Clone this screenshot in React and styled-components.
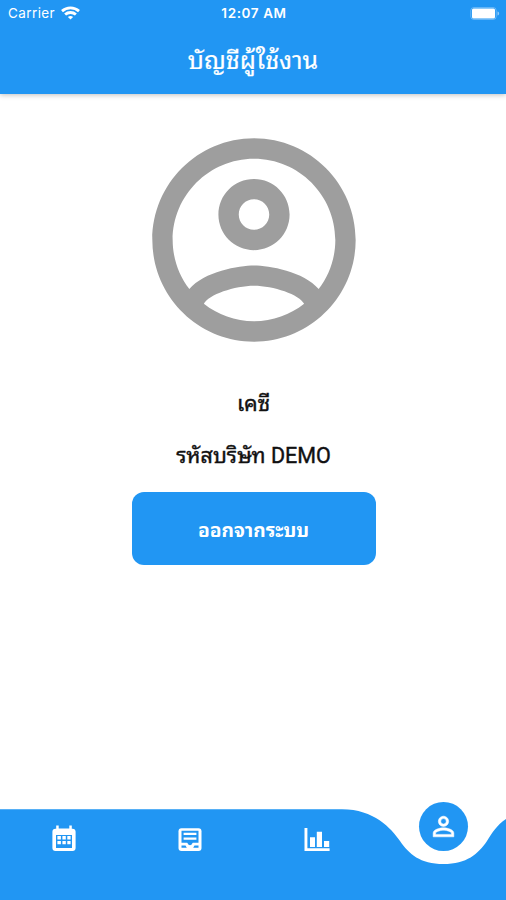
import React from 'react';
import styled, { createGlobalStyle } from 'styled-components';

const BLUE = '#2196f3';

const GlobalStyle = createGlobalStyle`
  * { box-sizing: border-box; }
  body { margin: 0; background: #fff; }
`;

const Screen = styled.div`
  display: flex;
  flex-direction: column;
  width: 506px;
  height: 900px;
  overflow: hidden;
  background: #fff;
  font-family: Roboto, "Noto Sans Thai Looped", Loma, "Noto Serif Thai", sans-serif;
`;

const Header = styled.header`
  height: 93.5px;
  flex: none;
  background: ${BLUE};
  color: #fff;
  box-shadow: 0 1px 5px rgba(0, 0, 0, 0.25);
`;

const StatusBar = styled.div`
  display: grid;
  grid-template-columns: 1fr auto 1fr;
  align-items: center;
  height: 26px;
  padding: 0 6px 0 8px;
  font: 500 13.5px/26px Inter, sans-serif;
`;

const Carrier = styled.div`
  display: flex;
  align-items: center;
  gap: 6px;
  font-weight: 400;
  letter-spacing: 0.4px;
`;

const Clock = styled.div`
  font-weight: 600;
  letter-spacing: 0.6px;
`;

const BatterySlot = styled.div`
  display: flex;
  justify-content: flex-end;
`;

const Title = styled.h1`
  margin: 0;
  height: 67px;
  text-align: center;
  font-size: 25px;
  line-height: 70px;
  font-weight: 400;
  -webkit-text-stroke: 0.2px #fff;
`;

const Content = styled.main`
  flex: 1;
  display: flex;
  flex-direction: column;
  align-items: center;
  padding: 24.5px 0 0 1px;
`;

const Avatar = styled.svg`
  width: 244px;
  height: 244px;
  fill: #9e9e9e;
`;

const Info = styled.div`
  height: 52px;
  margin-top: ${(p) => (p.$first ? '15px' : '0')};
  line-height: 53px;
  font-size: 21.5px;
  font-weight: 400;
  -webkit-text-stroke: 0.4px #111;
  color: #111;
`;

const LogoutButton = styled.button`
  width: 244px;
  height: 73px;
  margin-top: 11px;
  padding: 0;
  border: 0;
  border-radius: 12px;
  background: ${BLUE};
  color: #fff;
  font: inherit;
  font-size: 19.2px;
  font-weight: 700;
`;

const NavBar = styled.nav`
  position: relative;
  flex: none;
  height: 100px;
  display: grid;
  grid-template-columns: repeat(4, 126.5px);
`;

const NavShape = styled.svg`
  position: absolute;
  inset: 0;
  fill: ${BLUE};
`;

const NavItem = styled.div`
  position: relative;
  display: flex;
  justify-content: center;
  padding: ${(p) => (p.$active ? '2px 0 0 1px' : '24px 0 0 0.8px')};
`;

const ActiveDisc = styled.div`
  display: flex;
  align-items: center;
  justify-content: center;
  width: 49px;
  height: 49px;
  border-radius: 50%;
  background: ${BLUE};
`;

const WifiIcon = () => (
  <svg width="19" height="14" viewBox="0 0 19 14" fill="none" stroke="#fff" strokeWidth="2.8">
    <path d="M1 5.1C5.8.8 13.2.8 18 5.1" />
    <path d="M4.1 8.5c3-2.7 7.8-2.7 10.8 0" />
    <path d="M9.5 13.5 6.9 10.9c1.5-1.3 3.7-1.3 5.2 0z" fill="#fff" stroke="none" />
  </svg>
);

const BatteryIcon = () => (
  <svg width="30" height="13" viewBox="0 0 30 13">
    <rect x="0.8" y="0.5" width="25.4" height="12" rx="3" fill="none" stroke="#fff" strokeOpacity=".3" />
    <rect x="2" y="1.5" width="23" height="10" rx="1.5" fill="#fff" />
    <path d="M27.5 4.5c2.2.8 2.2 3.2 0 4z" fill="#fff" fillOpacity=".5" />
  </svg>
);

const CalendarIcon = () => (
  <svg width="24" height="28" viewBox="0 0 24 28" fill="#fff">
    <path fillRule="evenodd" d="M4.2 1.5h2.5v3h10.6v-3h2.5v3.2h.8c1.8 0 3 1.2 3 3v16.2c0 1.8-1.2 3-3 3H3.4c-1.8 0-3-1.2-3-3V7.7c0-1.8 1.2-3 3-3h.8zM4 11v13h16V11z" />
    <path d="M5.4 12h3.5v3.4H5.4zm5 0h3.4v3.4h-3.4zm4.9 0h3.3v3.4h-3.3zM5.4 17h3.5v3.2H5.4zm5 0h3.4v3.2h-3.4zm4.9 0h3.3v3.2h-3.3z" />
  </svg>
);

const InboxIcon = () => (
  <svg width="24" height="28" viewBox="0 0 24 28">
    <rect x=".5" y="4.2" width="23" height="22.8" rx="3" fill="#fff" />
    <path fill={BLUE} d="M3.5 6.7h17v12.1h-5.1c-.8 0-1.1.5-1.4 1.3-.6 1.5-3.4 1.5-4 0-.3-.8-.6-1.3-1.4-1.3H3.5z" />
    <path fill="#fff" d="M5.6 8.8h12.8v2.3H5.6zm0 4.6h12.8v2.3H5.6z" />
    <path fill={BLUE} d="M3.5 21.4h4l1.3 2.4H3.5zm17 0h-4l-1.3 2.4h5.3z" />
  </svg>
);

const ChartIcon = () => (
  <svg width="26" height="28" viewBox="0 0 26 28" fill="#fff">
    <path d="M.5 4h2.9v20.3h22.2V27H.5zM6 13.2h5V23H6zm6.8-5.4H18V23h-5.2zM20 17h5.2v6H20z" />
  </svg>
);

const PersonIcon = () => (
  <svg width="31" height="31" viewBox="0 0 24 24" fill="#fff">
    <path stroke="#fff" strokeWidth=".4" d="M12 5.9a2.1 2.1 0 1 1 0 4.2 2.1 2.1 0 0 1 0-4.2m0 9c2.97 0 6.1 1.46 6.1 2.1v1.1H5.9V17c0-.64 3.13-2.1 6.1-2.1M12 4C9.79 4 8 5.79 8 8s1.79 4 4 4 4-1.79 4-4-1.79-4-4-4m0 9c-2.67 0-8 1.34-8 4v3h16v-3c0-2.66-5.33-4-8-4" />
  </svg>
);

export default function App() {
  return (
    <Screen>
      <GlobalStyle />
      <Header>
        <StatusBar>
          <Carrier>Carrier <WifiIcon /></Carrier>
          <Clock>12:07 AM</Clock>
          <BatterySlot><BatteryIcon /></BatterySlot>
        </StatusBar>
        <Title>บัญชีผู้ใช้งาน</Title>
      </Header>
      <Content>
        <Avatar viewBox="0 0 24 24">
          <path d="M12 2C6.48 2 2 6.48 2 12s4.48 10 10 10 10-4.48 10-10S17.52 2 12 2zM7.07 18.28c.43-.9 3.05-1.78 4.93-1.78s4.51.88 4.93 1.78C15.57 19.36 13.86 20 12 20s-3.57-.64-4.93-1.72zm11.29-1.45c-1.43-1.74-4.9-2.33-6.36-2.33s-4.93.59-6.36 2.33C4.62 15.49 4 13.82 4 12c0-4.41 3.59-8 8-8s8 3.59 8 8c0 1.82-.62 3.49-1.64 4.83zM12 6c-1.94 0-3.5 1.56-3.5 3.5S10.06 13 12 13s3.5-1.56 3.5-3.5S13.94 6 12 6zm0 5c-.83 0-1.5-.67-1.5-1.5S11.17 8 12 8s1.5.67 1.5 1.5S12.83 11 12 11z" />
        </Avatar>
        <Info $first>เคซี</Info>
        <Info>รหัสบริษัท DEMO</Info>
        <LogoutButton>ออกจากระบบ</LogoutButton>
      </Content>
      <NavBar>
        <NavShape width="506" height="100" viewBox="0 0 506 100">
          <path d="M0 9.2H342C374 9.2 391 28 400 41C409 54 420 64 443.5 64C467 64 478 54 487 41C492 33 497 25 506 19V100H0z" />
        </NavShape>
        <NavItem><CalendarIcon /></NavItem>
        <NavItem><InboxIcon /></NavItem>
        <NavItem><ChartIcon /></NavItem>
        <NavItem $active><ActiveDisc><PersonIcon /></ActiveDisc></NavItem>
      </NavBar>
    </Screen>
  );
}
